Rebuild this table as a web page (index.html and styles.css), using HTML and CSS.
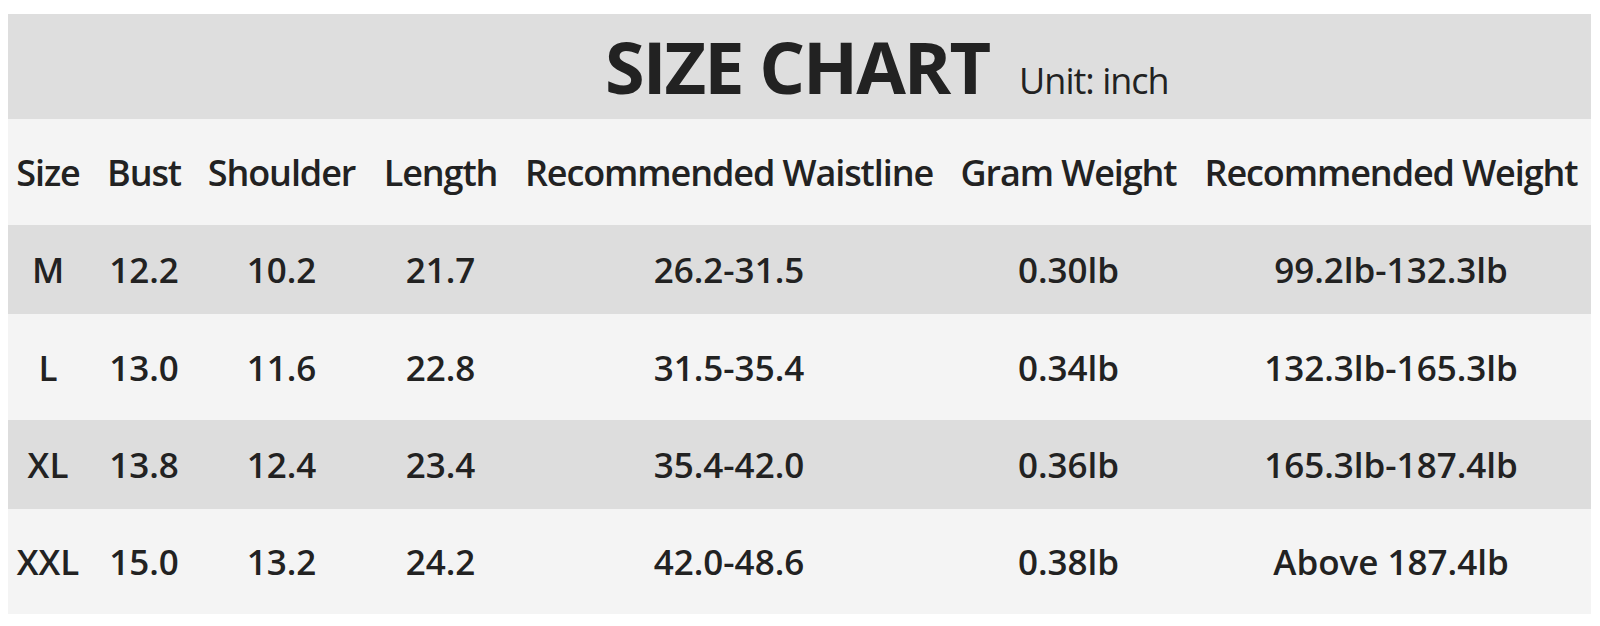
FILE: index.html
```html
<!DOCTYPE html>
<html>
<head>
<meta charset="utf-8">
<link rel="stylesheet" href="styles.css">
</head>
<body>
<div class="chart">
  <div class="title-band">
    <span class="title">SIZE CHART</span>
    <span class="unit">Unit: inch</span>
  </div>
  <div class="row head light">
    <div class="cell c1">Size</div>
    <div class="cell">Bust</div>
    <div class="cell">Shoulder</div>
    <div class="cell">Length</div>
    <div class="cell">Recommended Waistline</div>
    <div class="cell">Gram Weight</div>
    <div class="cell">Recommended Weight</div>
  </div>
  <div class="row dark short">
    <div class="cell c1">M</div>
    <div class="cell">12.2</div>
    <div class="cell">10.2</div>
    <div class="cell">21.7</div>
    <div class="cell">26.2-31.5</div>
    <div class="cell">0.30lb</div>
    <div class="cell">99.2lb-132.3lb</div>
  </div>
  <div class="row light">
    <div class="cell c1">L</div>
    <div class="cell">13.0</div>
    <div class="cell">11.6</div>
    <div class="cell">22.8</div>
    <div class="cell">31.5-35.4</div>
    <div class="cell">0.34lb</div>
    <div class="cell">132.3lb-165.3lb</div>
  </div>
  <div class="row dark short">
    <div class="cell c1">XL</div>
    <div class="cell">13.8</div>
    <div class="cell">12.4</div>
    <div class="cell">23.4</div>
    <div class="cell">35.4-42.0</div>
    <div class="cell">0.36lb</div>
    <div class="cell">165.3lb-187.4lb</div>
  </div>
  <div class="row light last-row">
    <div class="cell c1">XXL</div>
    <div class="cell">15.0</div>
    <div class="cell">13.2</div>
    <div class="cell">24.2</div>
    <div class="cell">42.0-48.6</div>
    <div class="cell">0.38lb</div>
    <div class="cell">Above 187.4lb</div>
  </div>
</div>
</body>
</html>
```

FILE: styles.css
```css
html, body {
  margin: 0;
  padding: 0;
  background: #ffffff;
}
body {
  padding: 14px 9px 0 8px;
  font-family: "Open Sans", "Liberation Sans", sans-serif;
  color: #222222;
}
.chart {
  width: 1583px;
}
.title-band {
  background: #dedede;
  height: 105px;
  display: flex;
  align-items: baseline;
  padding-left: 597px;
  box-sizing: border-box;
  padding-top: 12px;
}
.title {
  font-weight: 700;
  font-size: 72px;
  letter-spacing: -2px;
  line-height: 80px;
}
.unit {
  font-weight: 400;
  font-size: 36px;
  letter-spacing: -1px;
  margin-left: 30px;
}
.row {
  display: grid;
  grid-template-columns: 86px 100px 175px 143px 434px 245px 400px;
  align-items: center;
  height: 106px;
  font-weight: 600;
  font-size: 35px;
  letter-spacing: 0;
}
.row.short {
  height: 89px;
}
.row.last-row {
  height: 105px;
}
.row.head {
  font-size: 36px;
  letter-spacing: -1.1px;
}
.light {
  background: #f4f4f4;
}
.dark {
  background: #dddddd;
}
.cell {
  text-align: center;
  white-space: nowrap;
}
.cell.c1 {
  padding-right: 6px;
}
```
